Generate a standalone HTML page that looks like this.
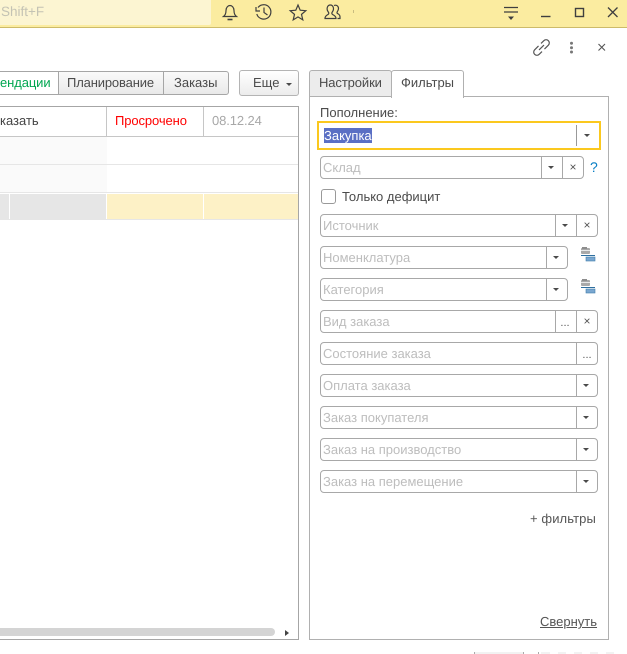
<!DOCTYPE html>
<html lang="ru"><head><meta charset="utf-8">
<style>
html,body{margin:0;padding:0;background:#fff}
#p{position:relative;width:627px;height:654px;overflow:hidden;background:#fff;font-family:"Liberation Sans",sans-serif;font-size:13px;color:#4b4b4b;text-rendering:geometricPrecision}
#p div,#p span.a{position:absolute;box-sizing:border-box}
.t{white-space:nowrap;line-height:16px}
.f{left:320px;height:23px;border:1px solid #a8a8a8;border-radius:4px;background:#fff}
.ph{position:absolute;left:2px;top:3px;line-height:16px;color:#bdbdbd;white-space:nowrap}
.dv{top:0;bottom:0;width:1px;background:#a8a8a8}
.ar{width:0;height:0;border-left:3px solid transparent;border-right:3px solid transparent;border-top:3px solid #4a4a4a}
.x{color:#555;font-size:12px;line-height:14px;width:10px;text-align:center}
.dd{color:#555;font-size:11px;line-height:14px;width:14px;text-align:center}
</style></head><body><div id="p">
<div style="left:0;top:0;width:627px;height:27px;background:#fbeca0"></div>
<div style="left:0;top:27px;width:627px;height:1px;background:#cdbb6a"></div>
<div style="left:0;top:0;width:211px;height:25px;background:#fcf5d2;border-radius:0 0 2px 0"></div>
<div class="t" style="left:1px;top:4px;color:#c4c3b4;font-size:13.5px">Shift+F</div>

<svg style="position:absolute;left:0;top:0" width="627" height="60" fill="none" stroke="#3f3f3f" stroke-width="1.2">
<path d="M223.500 16.500c2-1.500 2.500-3 2.500-6 0-3 2-5 4-5s4 2 4 5c0 3 .5 4.500 2.500 6z"/><path d="M227.500 19.500h5" stroke-width="1.600"/>
<path d="M258 7.500a7.200 7.200 0 1 1-1.200 6.500"/><path d="M256 7v4h4"/><path d="M264 7.500v5l3.500 2.500"/>
<path d="M298 5l2.200 5.200 5.600.5-4.300 3.700 1.300 5.500-4.800-3-4.800 3 1.300-5.500-4.300-3.700 5.600-.5z"/>
<path d="M325 18.500c0-2.500 1.500-3 3-4 1-.7 1-1.500.3-2.500-2.300-3-1-7 2-7s4.300 4 2 7c-.7 1-.7 1.800.3 2.500 1.500 1 3.400 1.500 3.400 4z"/><path d="M334 5.500c2.300-1 4.500.5 4.500 3 0 1.300-.6 2.300-1.200 3.200-.5.8-.4 1.500.5 2 1.200.7 2.200 1.200 2.200 3.100v1.700h-2.500"/>
<path d="M504 7.500h14M504 12h14" stroke-width="1.200"/><path d="M508 16.500h6l-3 3.500z" fill="#3f3f3f" stroke="none"/>
<path d="M541 16.500h9.500" stroke-width="1.400"/>
<rect x="575.500" y="8.500" width="8" height="8" stroke-width="1.400"/>
<path d="M608 7.500l9.500 9.500M617.500 7.500L608 17" stroke-width="1.300"/>
<path d="M353.500 10v3" stroke="#c9bc80" stroke-width="1"/>
<g transform="rotate(-45 541.500 47.500)" stroke="#555" stroke-width="1.200"><path d="M540.500 44.300h-5.500a3.200 3.200 0 0 0 0 6.400h4"/><path d="M542.500 50.700h5.500a3.200 3.200 0 0 0 0-6.400h-4"/><path d="M538 47.500h7"/></g>
<path d="M598.500 44l6.500 6.500M605 44l-6.500 6.500" stroke="#555" stroke-width="1.100"/>
<circle cx="571.500" cy="43.300" r="1.500" fill="#777" stroke="none"/><circle cx="571.500" cy="47.700" r="1.500" fill="#777" stroke="none"/><circle cx="571.500" cy="52" r="1.500" fill="#777" stroke="none"/>
</svg>

<!-- tabs left -->
<div style="left:-6px;top:71px;width:235px;height:24px;border:1px solid #a6a6a6;border-radius:3px;background:linear-gradient(#fafafa,#e9e9e9)"></div>
<div style="left:0;top:72px;width:58px;height:22px;background:#fff"></div>
<div style="left:58px;top:71px;width:1px;height:24px;background:#a6a6a6"></div>
<div style="left:163px;top:71px;width:1px;height:24px;background:#a6a6a6"></div>
<div class="t" style="left:0;top:75px;color:#00a650;letter-spacing:-.1px">ендации</div>
<div class="t" style="left:67px;top:75px;letter-spacing:-.15px">Планирование</div>
<div class="t" style="left:174px;top:75px">Заказы</div>
<div style="left:239px;top:70px;width:60px;height:26px;border:1px solid #b4b4b4;border-radius:3px;background:linear-gradient(#fff,#ececec)"></div>
<div class="t" style="left:253px;top:75px">Еще</div>
<div class="ar" style="left:286px;top:83px"></div>

<!-- table -->
<div style="left:-3px;top:106px;width:302px;height:534px;border:1px solid #a6a6a6;background:#fff"></div>
<div style="left:0;top:107px;width:298px;height:29px;background:#fff"></div>
<div style="left:0;top:136px;width:298px;height:1px;background:#c6c6c6"></div>
<div style="left:106px;top:107px;width:1px;height:29px;background:#c6c6c6"></div>
<div style="left:203px;top:107px;width:1px;height:29px;background:#c6c6c6"></div>
<div class="t" style="left:0;top:113px;color:#444">казать</div>
<div class="t" style="left:115px;top:113px;color:#f00;letter-spacing:-.1px">Просрочено</div>
<div class="t" style="left:212px;top:113px;color:#a8a8a8;letter-spacing:-.1px">08.12.24</div>
<div style="left:0;top:137px;width:107px;height:55px;background:#fafafa"></div>
<div style="left:0;top:164px;width:298px;height:1px;background:#e6e6e6"></div>
<div style="left:0;top:192px;width:298px;height:1px;background:#e6e6e6"></div>
<div style="left:0;top:194px;width:106px;height:25px;background:#e6e6e6"></div>
<div style="left:9px;top:194px;width:1px;height:25px;background:#fff"></div>
<div style="left:107px;top:194px;width:191px;height:25px;background:#fdf1c6"></div>
<div style="left:203px;top:194px;width:1px;height:25px;background:#fff"></div>
<div style="left:0;top:219px;width:298px;height:1px;background:#e6e6e6"></div>
<div style="left:0;top:628px;width:275px;height:8px;background:#d4d4d4;border-radius:0 4px 4px 0"></div>
<div style="left:285px;top:630px;width:0;height:0;border-top:3px solid transparent;border-bottom:3px solid transparent;border-left:4px solid #444"></div>

<!-- right panel -->
<div style="left:309px;top:96px;width:300px;height:544px;border:1px solid #b0b0b0;background:#fff"></div>
<div style="left:309px;top:70px;width:83px;height:27px;border:1px solid #b0b0b0;border-radius:3px 3px 0 0;background:#ececec"></div>
<div style="left:391px;top:70px;width:73px;height:28px;border:1px solid #b0b0b0;border-bottom:0;border-radius:3px 3px 0 0;background:#fff"></div>
<div class="t" style="left:319px;top:75px;letter-spacing:-.1px">Настройки</div>
<div class="t" style="left:401px;top:75px">Фильтры</div>

<div class="t" style="left:320px;top:105px">Пополнение:</div>
<div style="left:317px;top:121px;width:284px;height:29px;border:2px solid #fbc81e;background:#fff"></div>
<div style="left:576px;top:125px;width:1px;height:21px;background:#999"></div>
<div class="ar" style="left:584px;top:134px"></div>
<div style="left:324px;top:128px;width:48px;height:15px;background:#5a6fc4"></div>
<div class="t" style="left:324px;top:128px;color:#fff;line-height:15px">Закупка</div>

<div class="f" style="top:156px;width:264px"><span class="ph">Склад</span><div class="dv" style="left:220px"></div><div class="dv" style="left:241px"></div><div class="ar" style="left:227px;top:9px"></div><div class="x" style="left:247px;top:3px">×</div></div>
<div class="t" style="left:590px;top:159px;color:#0a7fc4;font-size:14px">?</div>

<div style="left:321px;top:189px;width:15px;height:15px;border:1px solid #999;border-radius:3px;background:#fff"></div>
<div class="t" style="left:342px;top:189px">Только дефицит</div>

<div class="f" style="top:214px;width:278px"><span class="ph">Источник</span><div class="dv" style="left:234px"></div><div class="dv" style="left:255px"></div><div class="ar" style="left:241px;top:9px"></div><div class="x" style="left:261px;top:3px">×</div></div>

<div class="f" style="top:246px;width:248px"><span class="ph">Номенклатура</span><div class="dv" style="left:225px"></div><div class="ar" style="left:232px;top:9px"></div></div>
<div class="f" style="top:278px;width:248px"><span class="ph">Категория</span><div class="dv" style="left:225px"></div><div class="ar" style="left:232px;top:9px"></div></div>

<svg style="position:absolute;left:580px;top:246px" width="16" height="50">
<g><rect x="1" y="2" width="9" height="6" rx="1" fill="#a9a9a9"/><rect x="2" y="1" width="5" height="2" fill="#8d8d8d"/><rect x="1" y="4" width="9" height="1" fill="#e8e8e8"/><rect x="1" y="9" width="14" height="1" fill="#2f6f9f"/><rect x="6" y="11" width="9" height="4" fill="#7aa7d0" stroke="#3f7cab" stroke-width=".6"/></g>
<g transform="translate(0,32)"><rect x="1" y="2" width="9" height="6" rx="1" fill="#a9a9a9"/><rect x="2" y="1" width="5" height="2" fill="#8d8d8d"/><rect x="1" y="4" width="9" height="1" fill="#e8e8e8"/><rect x="1" y="9" width="14" height="1" fill="#2f6f9f"/><rect x="6" y="11" width="9" height="4" fill="#7aa7d0" stroke="#3f7cab" stroke-width=".6"/></g>
</svg>

<div class="f" style="top:310px;width:278px"><span class="ph">Вид заказа</span><div class="dv" style="left:234px"></div><div class="dv" style="left:255px"></div><div class="dd" style="left:237px;top:5px">...</div><div class="x" style="left:261px;top:3px">×</div></div>
<div class="f" style="top:342px;width:278px"><span class="ph">Состояние заказа</span><div class="dv" style="left:255px"></div><div class="dd" style="left:259px;top:5px">...</div></div>
<div class="f" style="top:374px;width:278px"><span class="ph">Оплата заказа</span><div class="dv" style="left:255px"></div><div class="ar" style="left:262px;top:9px"></div></div>
<div class="f" style="top:406px;width:278px"><span class="ph">Заказ покупателя</span><div class="dv" style="left:255px"></div><div class="ar" style="left:262px;top:9px"></div></div>
<div class="f" style="top:438px;width:278px"><span class="ph">Заказ на производство</span><div class="dv" style="left:255px"></div><div class="ar" style="left:262px;top:9px"></div></div>
<div class="f" style="top:470px;width:278px"><span class="ph">Заказ на перемещение</span><div class="dv" style="left:255px"></div><div class="ar" style="left:262px;top:9px"></div></div>

<div class="t" style="left:530px;top:511px;color:#555;letter-spacing:.1px">+ фильтры</div>
<div class="t" style="left:540px;top:614px;color:#555;text-decoration:underline">Свернуть</div>

<div style="left:474px;top:652px;width:50px;height:2px;background:#f2f2f2"></div>
<div style="left:474px;top:652px;width:1px;height:2px;background:#aaa"></div>
<div style="left:523px;top:652px;width:1px;height:2px;background:#aaa"></div>
<div style="left:538px;top:652px;width:1px;height:2px;background:#aaa"></div>
<div style="left:541px;top:652px;width:9px;height:2px;background:#f2f2f2"></div>
<div style="left:558px;top:652px;width:8px;height:2px;background:#f2f2f2"></div>
<div style="left:574px;top:652px;width:8px;height:2px;background:#f2f2f2"></div>
<div style="left:590px;top:652px;width:8px;height:2px;background:#f2f2f2"></div>
<div style="left:606px;top:652px;width:8px;height:2px;background:#f2f2f2"></div>
</div></body></html>
